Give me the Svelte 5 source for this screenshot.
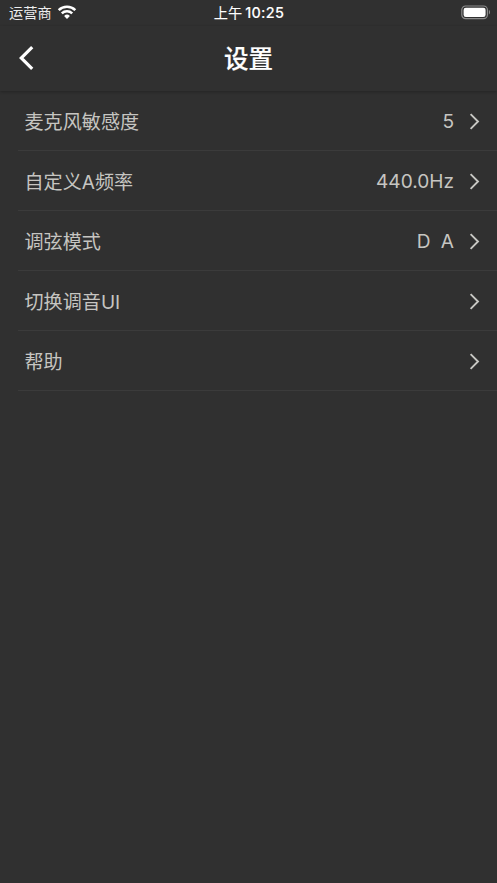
<script>
  const rows = [
    { label: '麦克风敏感度', value: '5' },
    { label: '自定义A频率', value: '440.0Hz' },
    { label: '调弦模式', value: 'D A', spaced: true },
    { label: '切换调音UI', value: '' },
    { label: '帮助', value: '' },
  ];
</script>

<div class="screen">
  <div class="status-bar">
    <div class="carrier">
      <span>运营商</span>
      <svg class="wifi" width="20" height="14" viewBox="0 0 20 14">
        <path d="M1.7 5.2a11.8 11.8 0 0 1 16.6 0M4.8 8.4a7.4 7.4 0 0 1 10.4 0" fill="none" stroke="#fff" stroke-width="2.5" />
        <path d="M10 13.9L7.1 11a4.1 4.1 0 0 1 5.8 0z" fill="#fff" />
      </svg>
    </div>
    <div class="time"><span>上午</span><span class="clock">10:25</span></div>
    <div class="battery">
      <svg width="30" height="15" viewBox="0 0 30 15">
        <rect x="0.8" y="1" width="25.6" height="12.6" rx="3.8" fill="none" stroke="#8c8c8c" stroke-width="1.2" />
        <rect x="2.6" y="2.7" width="22" height="9.2" rx="2.2" fill="#fff" />
        <path d="M27.9 5.1c1.5.5 1.5 3.9 0 4.4z" fill="#8c8c8c" />
      </svg>
    </div>
  </div>

  <div class="nav-bar">
    <button class="back" aria-label="返回">
      <svg width="16" height="26" viewBox="0 0 16 26">
        <path d="M13.2 2.2L2.2 13l11 10.8" fill="none" stroke="#fff" stroke-width="3.2" />
      </svg>
    </button>
    <h1>设置</h1>
  </div>

  <ul class="settings">
    {#each rows as row}
      <li class="row">
        <span class="label">{row.label}</span>
        <span class="value" class:spaced={row.spaced}>{row.value}</span>
        <svg class="chevron" width="11" height="18" viewBox="0 0 11 18">
          <path d="M1.6 2.1L9 9.5l-7.4 7.4" fill="none" stroke="#c8c8c4" stroke-width="1.9" />
        </svg>
      </li>
    {/each}
  </ul>
</div>

<style>
  :global(body) {
    background: #303030;
  }

  .screen {
    min-height: 883px;
    background: #303030;
    color: #c6c5c1;
    font-family: Inter, "Noto Sans CJK SC", sans-serif;
  }

  .status-bar {
    display: grid;
    grid-template-columns: 1fr auto 1fr;
    align-items: center;
    height: 26px;
    padding: 0 6px 0 9px;
    color: #fff;
    font-size: 14.2px;
    line-height: 26px;
  }

  .carrier {
    display: flex;
    align-items: center;
    gap: 5px;
    color: #ededed;
  }

  .wifi {
    margin-top: -2px;
  }

  .time {
    display: flex;
    gap: 3px;
    margin-right: 2px;
    -webkit-text-stroke: 0.1px #fff;
  }

  .clock {
    font-size: 14.4px;
    font-weight: 500;
    letter-spacing: 0.3px;
  }

  .battery {
    display: flex;
    justify-content: flex-end;
    margin-top: -1px;
  }

  .nav-bar {
    display: grid;
    grid-template-columns: 1fr auto 1fr;
    align-items: center;
    height: 65px;
    box-shadow: 0 1px 3px rgba(0, 0, 0, 0.25);
  }

  .back {
    display: flex;
    justify-self: start;
    margin: -2px 0 0 19px;
    padding: 0;
    border: 0;
    background: none;
  }

  h1 {
    margin: 0;
    padding-top: 1px;
    color: #fff;
    font-size: 24.5px;
    font-weight: 500;
    line-height: 64px;
    -webkit-text-stroke: 0.2px #fff;
  }

  .settings {
    margin: 0;
    padding: 0 0 0 18px;
    list-style: none;
  }

  .row {
    display: flex;
    align-items: center;
    box-sizing: border-box;
    height: 60px;
    padding: 1px 17px 0 6.5px;
    border-bottom: 1px solid #3b3b3b;
    font-size: 19.1px;
  }

  .label {
    flex: 1;
  }

  .value {
    white-space: pre;
  }

  .spaced {
    word-spacing: 5px;
  }

  .chevron {
    margin-left: 15px;
  }
</style>
